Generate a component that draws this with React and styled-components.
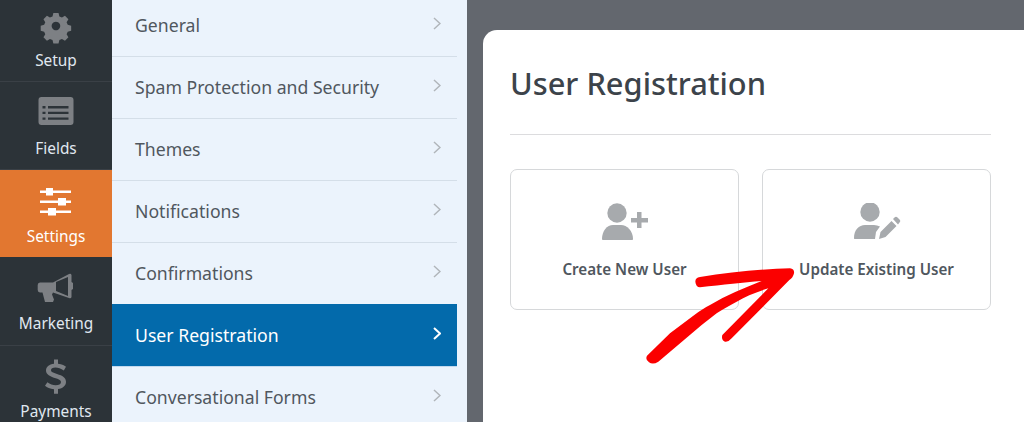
import React from 'react';
import styled, { createGlobalStyle } from 'styled-components';

const GlobalStyle = createGlobalStyle`
  html, body {
    margin: 0;
    padding: 0;
    height: 100%;
    overflow: hidden;
    background: #63676e;
    font-family: "Noto Sans", "Open Sans", sans-serif;
  }
`;

const Page = styled.div`
  position: relative;
  display: flex;
  width: 1024px;
  height: 422px;
  overflow: hidden;
`;

const Sidebar = styled.nav`
  flex: 0 0 112px;
  background: #2c3338;
  overflow: hidden;
`;

const SideList = styled.div`
  margin-top: -5.5px;
`;

const SideItem = styled.div`
  height: 87.75px;
  box-sizing: border-box;
  display: flex;
  flex-direction: column;
  align-items: center;
  padding-top: 12px;
  gap: 6.5px;
  font-size: 15.4px;
  line-height: 20px;
  color: ${(p) => (p.$active ? '#fff' : '#e0e8f0')};
  background: ${(p) => (p.$active ? '#e27730' : 'transparent')};
  border-bottom: 1px solid ${(p) => (p.$active ? '#2c3338' : '#3a4046')};
`;

const SideIcon = styled.svg`
  width: 38px;
  height: 38px;
  flex: none;
  fill: ${(p) => (p.$active ? '#fff' : '#7d8084')};
`;

const Panel = styled.div`
  flex: 0 0 355px;
  box-sizing: border-box;
  padding: 0 10px 0 0;
  background: #ebf3fc;
  overflow: hidden;
`;

const PanelList = styled.div`
  margin-top: -5px;
`;

const PanelItem = styled.div`
  height: ${(p) => (p.$active ? 63 : 62)}px;
  margin-top: ${(p) => (p.$active ? -1 : 0)}px;
  box-sizing: border-box;
  display: flex;
  align-items: center;
  justify-content: space-between;
  padding: 0 16px ${(p) => (p.$active ? 0 : 2)}px 23px;
  font-size: 17.65px;
  color: ${(p) => (p.$active ? '#fff' : '#50575e')};
  background: ${(p) => (p.$active ? '#036aab' : 'transparent')};
  border-bottom: 1px solid ${(p) => (p.$active ? '#c3d9ee' : '#d4dee8')};
`;

const Chevron = styled.svg`
  width: 8px;
  height: 13px;
  margin-top: ${(p) => (p.$active ? -3 : -2)}px;
  fill: none;
  stroke: ${(p) => (p.$active ? '#fff' : '#b0b5ba')};
  stroke-width: ${(p) => (p.$active ? 2 : 1.5)};
`;

const Content = styled.main`
  flex: 1;
  box-sizing: border-box;
  padding: 30px 0 0 16px;
  overflow: hidden;
`;

const Sheet = styled.section`
  height: 420px;
  box-sizing: border-box;
  padding: 30px 33px 0 27px;
  background: #fff;
  border-radius: 14px 0 0 0;
`;

const Title = styled.h1`
  margin: 0;
  height: 75px;
  box-sizing: border-box;
  font-size: 30.8px;
  line-height: 46px;
  font-weight: 500;
  color: #3c434a;
  border-bottom: 1px solid #dcdcde;
`;

const Cards = styled.div`
  display: flex;
  gap: 23px;
  margin-top: 34px;
`;

const Card = styled.div`
  width: 229px;
  height: 141px;
  box-sizing: border-box;
  border: 1px solid #d6d8da;
  border-radius: 7px;
  display: flex;
  flex-direction: column;
  align-items: center;
  padding-top: 33px;
  font-size: 15.2px;
  line-height: 20px;
  font-weight: 600;
  color: #50575e;
`;

const CardIcon = styled.svg`
  width: 48px;
  height: 38px;
  margin-bottom: 18px;
  fill: #a7aaad;
`;

const Arrow = styled.svg`
  position: absolute;
  left: 630px;
  top: 250px;
  width: 180px;
  height: 120px;
  fill: #fb0000;
`;

const sideItems = [
  {
    label: 'Setup',
    icon: (
      <path
        transform="translate(2.600 2.600) scale(.86)"
        fillRule="evenodd"
        d="M16 4h6l1 4 3 1.300 3.500-2.100 4 4-2.100 3.500 1.300 3 4 1v6l-4 1-1.300 3 2.100 3.500-4 4-3.500-2.100-3 1.300-1 4h-6l-1-4-3-1.300-3.500 2.100-4-4 2.100-3.500-1.300-3-4-1v-6l4-1 1.300-3-2.100-3.500 4-4L12 9.300 15 8zM19 14a5 5 0 1 0 .010 0z"
      />
    ),
  },
  {
    label: 'Fields',
    icon: (
      <path
        transform="translate(1.500 3)"
        fillRule="evenodd"
        d="M3 0h29a3 3 0 0 1 3 3v22a3 3 0 0 1-3 3H3a3 3 0 0 1-3-3V3a3 3 0 0 1 3-3zM4 9v2.400h3V9zm5.500 0v2.400H30V9zM4 14.700v2.400h3v-2.400zm5.500 0v2.400H30v-2.400zM4 20.400v2.400h3v-2.400zm5.500 0v2.400H30v-2.400z"
      />
    ),
  },
  {
    label: 'Settings',
    active: true,
    icon: (
      <path d="M3 8.500h6V6h7v2.500h18V11H16v2.500H9V11H3zM3 18.500h18V16h8v2.500h5V21h-5v2.500h-8V21H3zM3 28.500h8V26h8v2.500h15V31H19v2.500h-8V31H3z" />
    ),
  },
  {
    label: 'Marketing',
    icon: (
      <path
        fillRule="evenodd"
        d="M3 12.500H16L32 4q2-1 2.500 1V12l1.500 1v6l-1.500 1v7q-.500 2-2.500 1L16 22.500l-1 2 2 5-1 2.500H8L5.500 22.500H3Q.700 22 .700 20V15Q.700 12.500 3 12.500zM19 12V21l12 5V7z"
      />
    ),
  },
  {
    label: 'Payments',
    icon: (
      <path
        transform="translate(0 .5) scale(1 .88)"
        d="M17 1h4v5c4 .500 7 2.300 8 3.500l-2.200 4C24 11.500 21 10.300 18.500 10.300c-3 0-4.500 1.200-4.500 3 0 2 2 2.800 6 4.200 5.500 1.900 9 4 9 9 0 4.500-3 7.500-8 8.300V40h-4v-5.100c-4-.400-7-2-9-4l2.400-3.800c2.500 2.100 5.500 3.400 8.300 3.400 3 0 5.300-1.300 5.300-3.700 0-2.300-2.400-3.300-6.200-4.600C13.500 20.300 9 18.300 9 13.600c0-4.100 3-7 8-7.700z"
      />
    ),
  },
];

const panelItems = [
  'General',
  'Spam Protection and Security',
  'Themes',
  'Notifications',
  'Confirmations',
  'User Registration',
  'Conversational Forms',
];

function App() {
  return (
    <>
      <GlobalStyle />
      <Page>
        <Sidebar>
          <SideList>
            {sideItems.map((item) => (
              <SideItem key={item.label} $active={item.active}>
                <SideIcon viewBox="0 0 38 38" $active={item.active}>
                  {item.icon}
                </SideIcon>
                {item.label}
              </SideItem>
            ))}
          </SideList>
        </Sidebar>
        <Panel>
          <PanelList>
            {panelItems.map((name) => {
              const active = name === 'User Registration';
              return (
                <PanelItem key={name} $active={active}>
                  {name}
                  <Chevron viewBox="0 0 8 13" $active={active}>
                    <path d="M1 1l6 5.500L1 12" />
                  </Chevron>
                </PanelItem>
              );
            })}
          </PanelList>
        </Panel>
        <Content>
          <Sheet>
            <Title>User Registration</Title>
            <Cards>
              <Card>
                <CardIcon viewBox="0 0 48 38">
                  <circle cx="16" cy="10" r="9.700" />
                  <path d="M1 36c0-8 5-14 11-14h8c6 0 12 6 12 14 0 1-1 1-1 1H2s-1 0-1-1z" />
                  <path d="M36 9h4.500v6H47v4.500h-6.500V25H36v-5.500h-6V15h6z" />
                </CardIcon>
                Create New User
              </Card>
              <Card>
                <CardIcon viewBox="0 0 48 38">
                  <circle cx="17" cy="9" r="9.700" />
                  <path d="M1 35c0-8 5-13 11-13h9c2 0 4 .500 6 1.500L23 29l-1 7H2c-1 0-1-.500-1-1z" />
                  <path d="M26 36l1.500-7 11-11 5 5-11 11zM40 16l1.500-1.500c1-1 2-1 3 0l2 2c1 1 1 2 0 3L45 21.500z" />
                </CardIcon>
                Update Existing User
              </Card>
            </Cards>
          </Sheet>
        </Content>
        <Arrow viewBox="0 0 540 360">
          <path d="M196 95q0-12 14-14C300 66 400 57 480 55q14 2 12 15-3 14-14 20L305 265q-10 12-20 10-12-6-8-20L415 115C380 125 345 140 320 155 295 168 275 180 260 190L215 225 85 335q-16 10-28 2-12-8-6-20L120 250 190 197C210 183 225 172 240 165 290 135 340 115 395 93 340 97 280 104 210 112q-12 0-14-17z" />
        </Arrow>
      </Page>
    </>
  );
}

export default App;
